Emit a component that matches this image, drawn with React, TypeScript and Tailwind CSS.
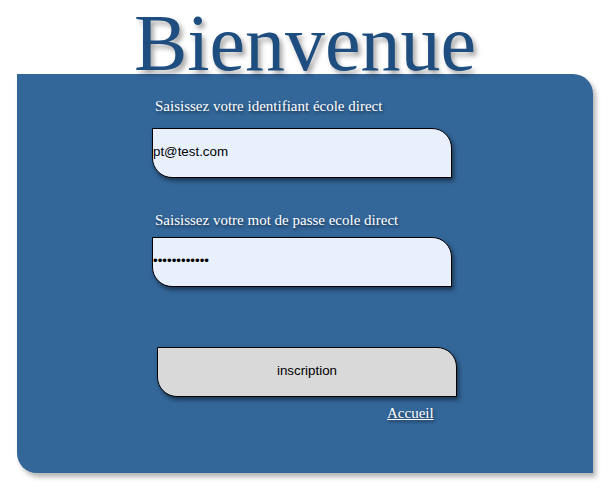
import { useState } from 'react'

export default function App() {
  const [email, setEmail] = useState('pt@test.com')
  const [password, setPassword] = useState('motdepasse12')

  return (
    <div className="min-h-[491px] w-[610px] bg-white font-['Liberation_Serif',serif]">
      {/* Title */}
      <h1 className="mb-[-9px] pt-[3px] text-center text-[80px] leading-none text-[#1e4d7f] [text-shadow:3px_4px_5px_rgba(0,0,0,0.35)]">
        Bienvenue
      </h1>

      {/* Form panel */}
      <div className="mx-[17px] flex h-[399px] flex-col rounded-tr-[20px] rounded-bl-[20px] bg-[#336699] pl-[138px] pt-[23px] shadow-[3px_4px_5px_rgba(0,0,0,0.3)]">
        <label className="text-[15px] leading-[18px] text-white [text-shadow:1px_2px_3px_rgba(0,0,0,0.5)]">
          Saisissez votre identifiant école direct
        </label>
        <input
          type="text"
          value={email}
          onChange={(e) => setEmail(e.target.value)}
          className="ml-[-3px] mt-[13px] h-[50px] w-[300px] rounded-tr-[20px] rounded-bl-[20px] border border-black bg-[#e8f0fe] pb-[4px] font-['Liberation_Sans',Arial,sans-serif] text-[13.33px] text-black shadow-[2px_3px_4px_rgba(0,0,0,0.45)] outline-none"
        />

        <label className="mt-[33px] text-[15px] leading-[18px] text-white [text-shadow:1px_2px_3px_rgba(0,0,0,0.5)]">
          Saisissez votre mot de passe ecole direct
        </label>
        <input
          type="password"
          value={password}
          onChange={(e) => setPassword(e.target.value)}
          className="ml-[-3px] mt-[8px] h-[50px] w-[300px] rounded-tr-[20px] rounded-bl-[20px] border border-black bg-[#e8f0fe] pb-[4px] font-['Liberation_Sans',Arial,sans-serif] text-[13.33px] text-black shadow-[2px_3px_4px_rgba(0,0,0,0.45)] outline-none"
        />

        <button className="ml-[2px] mt-[60px] h-[50px] w-[300px] rounded-tr-[20px] rounded-bl-[20px] border border-black bg-[#d9d9d9] pb-[2px] font-['Liberation_Sans',Arial,sans-serif] text-[13.33px] text-black shadow-[2px_3px_4px_rgba(0,0,0,0.45)]">
          inscription
        </button>

        <a
          href="#"
          className="ml-[232px] mt-[7px] self-start text-[15px] leading-[18px] text-white underline [text-shadow:1px_2px_3px_rgba(0,0,0,0.5)]"
        >
          Accueil
        </a>
      </div>
    </div>
  )
}
